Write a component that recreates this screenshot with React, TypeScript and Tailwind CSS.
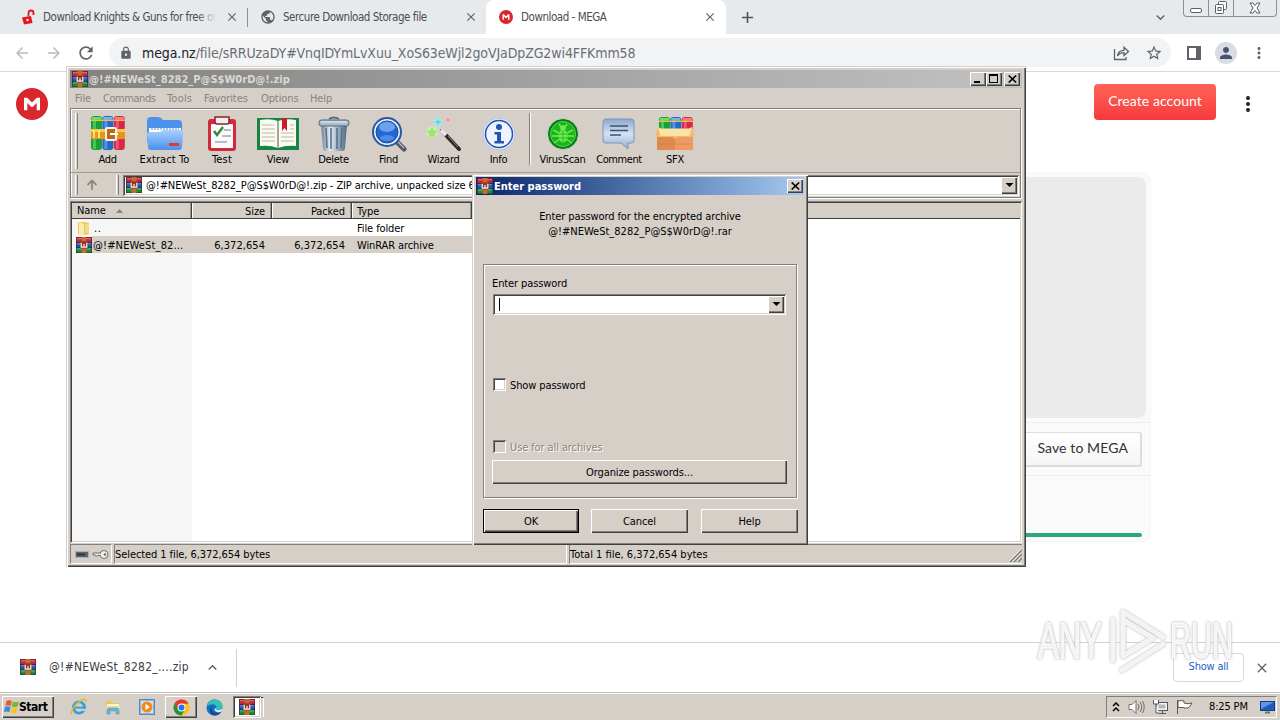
import React from "react";
import {
  MdArrowBack, MdArrowForward, MdRefresh, MdLock, MdStarBorder, MdPublic, MdMoreVert,
  MdExpandMore, MdExpandLess, MdAdd, MdClose, MdPerson,
} from "react-icons/md";

const ui = "font-['DejaVu_Sans_Condensed','DejaVu_Sans',sans-serif] [font-stretch:condensed] whitespace-pre";
const raised = "bg-[#d5cfc8] shadow-[inset_1px_1px_0_#fff,inset_-1px_-1px_0_#404040,inset_-2px_-2px_0_#808080]";
const sunken = "shadow-[inset_1px_1px_0_#808080,inset_-1px_-1px_0_#fff,inset_2px_2px_0_#404040,inset_-2px_-2px_0_#d5cfc8]";
const frame = "bg-[#d5cfc8] shadow-[inset_1px_1px_0_#d5cfc8,inset_2px_2px_0_#fff,inset_-1px_-1px_0_#404040,inset_-2px_-2px_0_#808080]";

function RarIcon({ size = 16 }: { size?: number }) {
  return (
    <svg width={size} height={size} viewBox="0 0 16 16" className="shrink-0">
      <rect x="0" y="0" width="16" height="16" fill="#3a1c28" />
      <rect x="0.5" y="0.5" width="15" height="4.6" fill="#c2283a" />
      <rect x="1" y="1" width="14" height="1.3" fill="#e0607c" />
      <rect x="0.5" y="5.8" width="15" height="4.6" fill="#2b50b4" />
      <rect x="1" y="6.2" width="14" height="1.2" fill="#6a8ae0" />
      <rect x="0.5" y="11" width="15" height="4.5" fill="#1c8a3c" />
      <rect x="1" y="11.3" width="14" height="1.2" fill="#55b860" />
      <rect x="5.6" y="0" width="4.8" height="4.500" fill="#c8682a" />
      <rect x="5.6" y="11.500" width="4.8" height="4.500" fill="#c8682a" />
      <rect x="4.5" y="4.500" width="7" height="7" fill="#8a3a2c" />
      <path d="M5.200 5.800v4.400h5.600V5.800M8 7v3" stroke="#f8f2ea" strokeWidth="1.2" fill="none" />
    </svg>
  );
}

function Books({ h = 34 }: { h?: number }) {
  const cols = ["#18a03a", "#2468cc", "#d82848"];
  const lights = ["#6cdc70", "#78b0f4", "#f87890"];
  return (
    <g>
      {cols.map((c, i) => (
        <g key={c}>
          <rect x={i * 11.4} y="0" width="11" height={h} rx="3" fill={c} />
          <rect x={i * 11.4 + 2} y="1" width="3" height={h - 2} fill={lights[i]} opacity="0.6" />
          <rect x={i * 11.4 + 1} y="1" width="9" height="2.500" fill={lights[i]} />
          <rect x={i * 11.4} y="3.500" width="11" height="1.5" fill="#f0c040" />
        </g>
      ))}
    </g>
  );
}

const AddIcon = () => (
  <svg width="36" height="36" viewBox="0 0 36 36">
    <g transform="translate(1 0)"><Books /></g>
    <rect x="1" y="13" width="34" height="10" fill="#e8951c" />
    <rect x="1" y="13" width="34" height="3" fill="#f8cc50" />
    <path d="M4 14v8M9 14v8" stroke="#fbe27a" strokeWidth="2" />
    <rect x="16" y="12" width="10" height="12" rx="1" fill="#b86c18" stroke="#f4f0e4" strokeWidth="2" />
    <path d="M20 18h8" stroke="#fff" strokeWidth="2" />
  </svg>
);
const ExtractIcon = () => (
  <svg width="38" height="36" viewBox="0 0 38 36">
    <defs><linearGradient id="fold" x1="0" y1="0" x2="0" y2="1"><stop offset="0" stopColor="#a8d2ff" /><stop offset="1" stopColor="#4a90ec" /></linearGradient></defs>
    <path d="M1 5q0-4 4-4h7q3 0 5 3h15q4 0 4 4v18H1z" fill="#4c92ec" />
    <path d="M3 12h32v9H3z" fill="#fff" />
    <path d="M5 13h28" stroke="#a8c4e8" strokeDasharray="2 1" strokeWidth="2" />
    <path d="M1 18q0-2 2-2h11l3-2h17q3 0 3 3l-1 14q0 3-3 3H5q-3 0-3-3z" fill="url(#fold)" />
    <rect x="23" y="27" width="10" height="3" fill="#e03c2c" />
  </svg>
);
const TestIcon = () => (
  <svg width="30" height="36" viewBox="0 0 30 36">
    <rect x="1" y="3" width="28" height="32" rx="3" fill="#d02a3c" />
    <rect x="4" y="8" width="22" height="24" rx="1" fill="#fafafa" />
    <path d="M8 1h14v5q0 2-2 2H10q-2 0-2-2z" fill="#eee" stroke="#8e1f2c" strokeWidth="1.5" />
    <path d="M7 15l3 4 6-8" stroke="#2c8a3c" strokeWidth="2.4" fill="none" />
    <path d="M17 14h7M15 20h9M8 26h12" stroke="#a4a8ac" strokeWidth="1.3" />
  </svg>
);
const ViewIcon = () => (
  <svg width="44" height="36" viewBox="0 0 44 36">
    <path d="M1 2h42v32H1z" fill="#168442" />
    <path d="M4 4q10-2 18 1 8-3 18-1v26q-10-1-18 2-8-3-18-2z" fill="#fcfbf2" />
    <path d="M22 5v27" stroke="#a8a694" strokeWidth="2" />
    <path d="M6 9h12M6 13h13M6 17h13M6 21h13M6 25h13M25 17h13M25 21h13M25 25h13M34 9h4M34 13h4" stroke="#b9b7aa" />
    <path d="M26 2h5v13l-2.5-3-2.500 3z" fill="#c81e2c" />
  </svg>
);
const DeleteIcon = () => (
  <svg width="32" height="36" viewBox="0 0 32 36">
    <defs><linearGradient id="bin"><stop offset="0" stopColor="#6a8098" /><stop offset=".35" stopColor="#e4edf5" /><stop offset=".7" stopColor="#8fa5ba" /><stop offset="1" stopColor="#4f6880" /></linearGradient></defs>
    <path d="M11 3q5-3 10 0" stroke="#56687a" strokeWidth="2" fill="none" />
    <path d="M3 9h26l-2 23q0 3-3 3H8q-3 0-3-3z" fill="url(#bin)" />
    <path d="M8 12l1 20M13 12v21M19 12v21M24 12l-1 20" stroke="#5a728a" strokeWidth="1.6" />
    <rect x="1" y="4" width="30" height="6" rx="2.500" fill="#a9bdce" stroke="#4f6478" />
    <path d="M3 6h26" stroke="#e8f0f6" />
  </svg>
);
const FindIcon = () => (
  <svg width="36" height="36" viewBox="0 0 36 36">
    <path d="M25 25l8 8" stroke="#55595e" strokeWidth="5" strokeLinecap="round" />
    <path d="M26 25l7 7" stroke="#b8bcc0" strokeWidth="1.3" />
    <circle cx="16" cy="16" r="14" fill="#e8f0fa" stroke="#2458a4" strokeWidth="2" />
    <circle cx="16" cy="16" r="11" fill="#2466d4" stroke="#174a98" />
    <ellipse cx="16" cy="11" rx="8" ry="5" fill="#7eb0f2" opacity=".8" />
    <ellipse cx="16" cy="22" rx="7" ry="3" fill="#5c9cf0" opacity=".7" />
  </svg>
);
const WizardIcon = () => (
  <svg width="36" height="36" viewBox="0 0 36 36">
    <path d="M16 15l17 18" stroke="#2c2624" strokeWidth="4" strokeLinecap="round" />
    <path d="M15 14l5 5" stroke="#e8e6e4" strokeWidth="4" />
    <path d="M22 20l10 11" stroke="#8a8280" />
    <circle cx="6" cy="16" r="6" fill="#c8f4a4" opacity=".7" /><path d="M6 11l1.500 3.500 4 .5-3 2.500 1 4-3.500-2-3.500 2 1-4-3-2.500 4-.5z" fill="#9ce66c" />
    <circle cx="12" cy="6" r="4.500" fill="#a4ecf4" opacity=".7" /><path d="M12 2l1 3 3 1-3 1-1 3-1-3-3-1 3-1z" fill="#5cd2e2" />
    <circle cx="22" cy="4" r="2.500" fill="#f8b8c0" opacity=".8" /><circle cx="22" cy="4" r="1" fill="#f06a80" />
  </svg>
);
const InfoIcon = () => (
  <svg width="36" height="36" viewBox="0 0 36 36">
    <circle cx="18" cy="18" r="16" fill="#e2ecfa" stroke="#b4c6e6" />
    <circle cx="18" cy="18" r="13.500" fill="#eef4ff" stroke="#2454b4" strokeWidth="1.5" />
    <circle cx="18" cy="11" r="3" fill="#2454b4" />
    <path d="M13.500 16H20v9h3v2.500H13.500V25H16v-6.500h-2.500z" fill="#2454b4" />
  </svg>
);
const VirusIcon = () => (
  <svg width="36" height="36" viewBox="0 0 36 36">
    <circle cx="18" cy="18" r="15.500" fill="#0a7418" stroke="#c4d8c0" strokeWidth="1" />
    <circle cx="18" cy="18" r="12.500" fill="#1cb41c" stroke="#58dc48" />
    <ellipse cx="18" cy="20" rx="4.500" ry="6.500" fill="#6cea50" /><circle cx="18" cy="12" r="2.800" fill="#6cea50" />
    <path d="M8 14l6 3M28 14l-6 3M7 20h7M29 20h-7M9 27l6-4M27 27l-6-4M14 8l2 3M22 8l-2 3" stroke="#6cea50" strokeWidth="1.500" />
    <path d="M18 14v12M14 18h8M14 22h8" stroke="#1cb41c" strokeWidth=".8" />
  </svg>
);
const CommentIcon = () => (
  <svg width="36" height="36" viewBox="0 0 36 36">
    <defs><linearGradient id="cm" x1="0" y1="0" x2="0" y2="1"><stop offset="0" stopColor="#8ea8cc" /><stop offset=".5" stopColor="#d4e2f4" /><stop offset="1" stopColor="#92acd2" /></linearGradient></defs>
    <path d="M5 3h25q3 0 3 3v18q0 3-3 3h-3v6l-7-6H5q-3 0-3-3V6q0-3 3-3z" fill="url(#cm)" stroke="#7c94b8" />
    <path d="M9 10h18M9 14.500h18M9 19h11" stroke="#3c5070" strokeWidth="1.600" />
  </svg>
);
const SfxIcon = () => (
  <svg width="40" height="36" viewBox="0 0 40 36">
    <g transform="translate(4 1)"><Books h={14} /></g>
    <path d="M2 18h36v16H2z" fill="#e08a50" />
    <path d="M20 18h18v16H20z" fill="#ee9a60" />
    <path d="M3 11l3 1.500h28l3-1.500v9H3z" fill="#fbe4a4" />
    <path d="M3 11L0 20l3 1h14l3 2 3-2h14l3-1-3-9-2.500 9h-29z" fill="#f0bc74" />
    <path d="M2 28h36" stroke="#c8703c" opacity=".4" />
  </svg>
);

const ChromeIcon = () => (
  <svg width="17" height="17" viewBox="0 0 18 18">
    <circle cx="9" cy="9" r="8.500" fill="#fbc116" />
    <path d="M1.600 4.800A8.500 8.500 0 0 0 9 17.500l3.600-6.400L9 9z" fill="#229342" />
    <path d="M1.600 4.800L5.400 11 9 5h7.400A8.500 8.500 0 0 0 1.600 4.800z" fill="#e33b2e" />
    <circle cx="9" cy="9" r="4.200" fill="#fff" /><circle cx="9" cy="9" r="3.200" fill="#2a72e8" />
  </svg>
);
const EdgeIcon = () => (
  <svg width="17" height="17" viewBox="0 0 18 18">
    <circle cx="9" cy="9" r="8.500" fill="#1272c8" />
    <path d="M.8 7.500C2 3 5.500.5 9.500.5c4.700 0 8 3.300 8 7 0 3-2.300 4.300-4.500 4.300-2 0-3-.8-2.300-2C12 7.500 9.500 5.500 7 5.500 4 5.500 2 6.500.8 7.500z" fill="#35c1b4" />
    <path d="M.8 7.500C2 3 5.500.5 9.500.5 7 1 3 3 .8 7.500z" fill="#2aa0e0" />
    <path d="M7 6.500c-2 3-.5 8 5 8.500 2 0 4-1.200 4.500-1.500-2 3-5.500 4.500-9 3.800C3.500 15.500 3 9.500 7 6.500z" fill="#0c4c98" />
    <path d="M10.700 9.800c-.6 1.400.7 2 2.300 2 2 0 3.500-.6 4.500-2.500 0 2-.8 3.600-1.500 4.200-3 1.300-6.500.3-7-2 0-1 .8-1.500 1.700-1.700z" fill="#e4eef0" />
  </svg>
);
const IeIcon = () => (
  <svg width="18" height="18" viewBox="0 0 18 18">
    <circle cx="9" cy="9.500" r="5.600" fill="none" stroke="#3a9ee0" strokeWidth="2.800" />
    <path d="M5 9.600h9.500" stroke="#3a9ee0" strokeWidth="2" />
    <path d="M11.500 11h5.500v1.800h-5.500z" fill="#d5cfc8" />
    <path d="M2 16.500C-.5 14 5 6 11 2.500c3-1.600 5.600-1.600 5 1.500" stroke="#e8b82c" strokeWidth="1.500" fill="none" />
  </svg>
);
const ExplorerIcon = () => (
  <svg width="18" height="18" viewBox="0 0 18 18">
    <path d="M2 3h5l1 2h7v9H2z" fill="#e8c858" /><path d="M3 6h12v3H3z" fill="#fbf4cc" />
    <path d="M2 8h14v6H2z" fill="#f6df8c" />
    <path d="M3 16v-4q0-2 2-2h8q2 0 2 2v4h-3v-3H6v3z" fill="#68b4e0" stroke="#4a94c4" strokeWidth=".6" />
  </svg>
);
const MediaIcon = () => (
  <svg width="16" height="16" viewBox="0 0 16 16">
    <rect x=".5" y=".5" width="15" height="15" fill="#8cb8e0" stroke="#5888b4" />
    <rect x="2" y="2" width="12" height="12" fill="#d4e2ee" />
    <circle cx="8" cy="8" r="5.500" fill="#f08a1c" /><path d="M6.500 5l4.500 3-4.500 3z" fill="#fff" />
  </svg>
);
const WinFlag = () => (
  <svg width="16" height="16" viewBox="0 0 16 16" className="shrink-0">
    <path d="M2.500 2Q5 .5 7.800 2L6.700 7Q4 5.700 1.300 7z" fill="#ec5a2c" />
    <path d="M8.700 2.400q3 1.300 6.300 0L13.800 7.600q-3 1.200-6.200-.1z" fill="#7ab83c" />
    <path d="M1 8q2.800-1.400 5.500 0l-1.200 5.200Q2.500 12 0 13z" fill="#3a8ae0" />
    <path d="M7.400 8.600q3 1.400 6.100.2L12.300 14q-3.200 1.200-6.100-.2z" fill="#f8c42c" />
  </svg>
);
const MegaLogo = ({ size }: { size: number }) => (
  <svg width={size} height={size} viewBox="0 0 32 32" className="shrink-0">
    <circle cx="16" cy="16" r="16" fill="#d9272e" />
    <path d="M8 22.300V9.700h3.200l4.800 4.800 4.800-4.800H24v12.600h-3.300v-7.400L16 19.500l-4.700-4.600v7.400z" fill="#fff" />
  </svg>
);
const DropArrow = () => <svg width="9" height="5" viewBox="0 0 9 5"><path d="M.5 0h8L4.500 4z" fill="#000" /></svg>;

function WinClose() {
  return (
    <div className={`${raised} w-4 h-[14px] flex items-center justify-center`}>
      <svg width="9" height="8" viewBox="0 0 9 8"><path d="M.7.5l7.500 7M8.200.5l-7.500 7" stroke="#000" strokeWidth="1.600" /></svg>
    </div>
  );
}

function Tab({ icon, label, fade, className }: { icon: React.ReactNode; label: string; fade?: boolean; className: string }) {
  return (
    <div className={`flex items-center h-[34px] shrink-0 ${className}`}>
      <span className="w-[14px] mr-[8px] flex justify-center">{icon}</span>
      <span className={`relative flex-1 overflow-hidden text-[11.5px] tracking-[-0.46px] text-[#4a4d51] pt-px ${ui}`}>
        {label}
        {fade && <span className="absolute right-0 top-0 h-full w-5 bg-linear-to-r from-transparent to-[#e7eaed]" />}
      </span>
      <MdClose className="ml-[8px] text-[#5f6368]" size={14} />
    </div>
  );
}

function Browser() {
  return (
    <>
      <div className="flex h-[34px] bg-[#e7eaed] shrink-0">
        <Tab className="w-[239px] pl-[21px]" fade label="Download Knights & Guns for free or" icon={
          <svg width="14" height="16" viewBox="0 0 14 16"><path d="M1 8.500l9-1.500 1.500 7-8.500 1.500z" fill="#e8141c" /><path d="M7.500 7.500V4q0-2.500 2.500-2.500T12.500 4v2" stroke="#e8141c" strokeWidth="1.800" fill="none" /><circle cx="6.500" cy="11" r="1.200" fill="#fff" /></svg>} />
        <div className="pt-2 w-[22px] pl-[8px]"><div className="w-px h-[19px] bg-[#8a8d91]" /></div>
        <Tab className="w-[217px]" label="Sercure Download Storage file" icon={<MdPublic size={16} className="text-[#5f6368] shrink-0" />} />
        <div className="w-2" />
        <div className="w-[240px] bg-white rounded-t-[8px]">
          <Tab className="w-[231px] pl-[13px]" label="Download - MEGA" icon={<MegaLogo size={14} />} />
        </div>
        <div className="flex items-center pl-[12px]"><MdAdd size={19} className="text-[#4d5156]" /></div>
        <div className="flex-1" />
        <div className="flex items-center pr-[14px]"><MdExpandMore size={17} className="text-[#5f6368]" /></div>
        <div className="flex h-[17px] w-[94px] mr-[3px] border border-t-0 border-[#8c9095] rounded-b-[4px]">
          <div className="w-[25px] border-r border-[#8c9095] flex justify-center items-end pb-[3px]"><div className="w-3 h-[5px] rounded-[2px] border border-[#5a5e63] bg-white" /></div>
          <div className="w-[25px] border-r border-[#8c9095] flex justify-center">
            <svg width="15" height="15" viewBox="0 0 15 15" fill="#fff" stroke="#5a5e63"><rect x="4.500" y="1.500" width="8" height="8" rx="1" /><rect x="1.500" y="4.500" width="8" height="9" rx="1" /><rect x="4" y="7.500" width="3" height="3" /></svg>
          </div>
          <div className="flex-1 flex justify-center pt-[2px]">
            <svg width="12" height="12" viewBox="0 0 12 12"><path d="M1 1h3l2 2.500L8 1h3L8 6l3 5H8L6 8.500 4 11H1l3-5z" fill="#fff" stroke="#5a5e63" /></svg>
          </div>
        </div>
      </div>
      <div className="flex items-center h-[38px] bg-white border-b border-[#d8d9db] shrink-0 text-[#5f6368]">
        <MdArrowBack size={18} className="ml-[13px] text-[#b9bbbe]" />
        <MdArrowForward size={18} className="ml-[14px] text-[#b9bbbe]" />
        <MdRefresh size={20} className="ml-[13px]" />
        <div className="ml-[13px] w-[1062px] h-[29px] rounded-full bg-[#f1f3f4] flex items-center">
          <MdLock size={14} className="ml-[10px] mr-[9px]" />
          <span className={`flex-1 text-[14px] tracking-[-0.1px] text-[#6a6e73] pt-px ${ui}`}><span className="text-[#202124]">mega.nz</span>/file/sRRUzaDY#VnqIDYmLvXuu_XoS63eWjl2goVJaDpZG2wi4FFKmm58</span>
          <svg width="17" height="16" viewBox="0 0 17 16" fill="none" stroke="#5f6368" strokeWidth="1.300" className="mr-[15px]"><path d="M1.500 4v10.500h11.500V12" /><path d="M4.500 11C5 7 7.500 5.300 11 5.300V2.200L15.500 6.500 11 10.500V7.700C8 7.700 6 8.500 4.500 11z" /></svg>
          <MdStarBorder size={18} className="mr-[8px]" />
        </div>
        <svg width="14" height="14" viewBox="0 0 14 14" className="ml-[16px]"><rect x="1" y="1" width="12" height="12" fill="#fff" stroke="#5f6368" strokeWidth="2" /><rect x="9" y="0" width="5" height="14" fill="#5f6368" /></svg>
        <div className="ml-[14px] w-[22px] h-[22px] rounded-full bg-[#d9dde3] flex items-center justify-center"><MdPerson size={18} className="text-[#46546e]" /></div>
        <MdMoreVert size={18} className="ml-[13px]" />
      </div>
      <div className="relative flex-1 bg-white">
        <div className="flex items-start justify-between">
          <div className="pl-4 pt-4"><MegaLogo size={32} /></div>
          <div className="flex pt-3 pr-[23px] items-center gap-[23px]">
            <div className="w-[122px] h-9 pb-[3px] rounded-[4px] bg-linear-to-b from-[#ff6258] to-[#f6393c] text-white font-['Lato',sans-serif] text-[14px] tracking-[0.06px] flex items-center justify-center">Create account</div>
            <div className="flex flex-col gap-[2px] w-[18px] items-center pt-1"><i className="w-1 h-1 rounded-full bg-[#222]" /><i className="w-1 h-1 rounded-full bg-[#222]" /><i className="w-1 h-1 rounded-full bg-[#222]" /></div>
          </div>
        </div>
        <div className="absolute left-[560px] top-[100px] w-[591px] h-[370px] rounded-[9px] bg-[#fafafa] border border-[#f6f6f6] flex flex-col">
          <div className="m-1 mt-[4px] h-[241px] rounded-[8px] bg-[#ebebeb]" />
          <div className="border-y border-[#eeeeee] h-[54px] flex items-center justify-end pr-2">
            <div className="h-[35px] w-[130px] rounded-[3px] border border-[#dcdcdc] border-b-2 border-r-2 bg-linear-to-b from-white to-[#f5f5f5] text-[#303233] font-['Lato',sans-serif] text-[14px] tracking-[0.1px] flex items-center justify-end pr-[12px] pb-[2px]">Save to MEGA</div>
          </div>
          <div className="mt-[57px] mr-2 h-1 rounded-full bg-[#2ba97d]" />
        </div>
      </div>
      <div className="h-[50px] shrink-0 border-t border-[#cfd0d2] bg-white flex items-center">
        <div className="ml-[20px] pb-[2px]"><RarIcon /></div>
        <span className={`ml-[13px] text-[12px] w-[141px] text-[#3c4043] tracking-[0.26px] pb-px ${ui}`}>@!#NEWeSt_8282_....zip</span>
        <MdExpandLess size={17} className="ml-[14px] text-[#5f6368]" />
        <div className="ml-[15px] w-px h-[38px] bg-[#cfd0d2]" />
        <div className="flex-1" />
        <div className={`w-[71px] h-[29px] border border-[#d6d8db] rounded-[4px] text-[#1a63c8] text-[11px] tracking-[-0.2px] flex items-center justify-center pb-px ${ui}`}>Show all</div>
        <MdClose size={16} className="ml-[10px] mr-[10px] text-[#5f6368]" />
      </div>
    </>
  );
}

const tools = [
  { l: "Add", w: "w-[55px]", t: "", i: <AddIcon /> },
  { l: "Extract To", w: "w-[59px]", t: "tracking-[0.1px]", i: <ExtractIcon /> },
  { l: "Test", w: "w-[56px]", t: "tracking-[0.2px]", i: <TestIcon /> },
  { l: "View", w: "w-[56px]", t: "", i: <ViewIcon /> },
  { l: "Delete", w: "w-[55px]", t: "", i: <DeleteIcon /> },
  { l: "Find", w: "w-[55px]", t: "", i: <FindIcon /> },
  { l: "Wizard", w: "w-[55px]", t: "", i: <WizardIcon /> },
  { l: "Info", w: "w-[55px]", t: "", i: <InfoIcon /> },
  { l: "VirusScan", w: "w-[57px]", t: "", i: <VirusIcon /> },
  { l: "Comment", w: "w-[56px]", t: "tracking-[-0.4px]", i: <CommentIcon /> },
  { l: "SFX", w: "w-[56px]", t: "", i: <SfxIcon /> },
];
const Grip = ({ className }: { className: string }) => <div className={`w-[3px] shrink-0 border-l border-white border-r border-r-[#808080] ${className}`} />;

function Archive() {
  return (
    <div className={`absolute left-[66px] top-[66px] w-[960px] h-[501px] pt-1 px-1 flex flex-col text-black text-[11px] leading-[13px] tracking-[-0.1px] ${ui} ${frame}`}>
      <div className="h-[18px] shrink-0 flex items-center pl-[2px] pr-[2px] bg-linear-to-r from-[#828282] to-[#c2c2c2]">
        <RarIcon />
        <span className="ml-[1px] flex-1 font-bold text-[#dcd8d2] tracking-[0px]">@!#NEWeSt_8282_P@S$W0rD@!.zip</span>
        <div className={`${raised} w-4 h-[14px] pl-1 pt-[9px]`}><div className="w-[6px] h-[2px] bg-black" /></div>
        <div className={`${raised} w-4 h-[14px] pl-[3px] pt-[2px] mr-[2px]`}><div className="w-[9px] h-[9px] border border-t-2 border-black" /></div>
        <WinClose />
      </div>
      <div className="h-[20px] shrink-0 flex items-center text-[#8a827b] tracking-[-0.1px] pl-[5px]">
        <span className="w-[28px]">File</span><span className="w-[64px] tracking-[-0.45px]">Commands</span><span className="w-[37px] tracking-[0.2px]">Tools</span><span className="w-[57px]">Favorites</span><span className="w-[49px]">Options</span><span>Help</span>
      </div>
      <div className="h-[90px] w-[951px] shrink-0 border border-[#808080] shadow-[inset_1px_1px_0_#fff,1px_1px_0_#fff] flex flex-col">
        <div className="flex h-[64px] pt-[4px] pl-[4px] border-b border-[#a09a94] tracking-[-0.3px]">
          <Grip className="h-[56px] mr-[2px]" />
          {tools.map((t) => (
            <React.Fragment key={t.l}>
              {t.l === "VirusScan" && <div className="w-[2px] h-[52px] mx-[3px] border-l border-[#808080] border-r border-r-white" />}
              <div className={`${t.w} shrink-0 flex flex-col items-center pt-[2px]`}>
                <div className="h-[38px] flex items-center">{t.i}</div>
                <span className={t.t}>{t.l}</span>
              </div>
            </React.Fragment>
          ))}
        </div>
        <div className="flex items-center h-[24px] pl-[4px]">
          <Grip className="h-5" />
          <svg width="12" height="12" viewBox="0 0 12 12" className="ml-[8px]"><path d="M6 11V2M1.500 6L6 1.500 10.500 6" stroke="#8e8882" strokeWidth="1.800" fill="none" /></svg>
          <Grip className="h-5 ml-[18px]" />
          <div className={`ml-[4px] w-[896px] h-[21px] bg-white flex items-center p-[2px] ${sunken}`}>
            <div className="ml-px"><RarIcon /></div>
            <span className="ml-[4px] flex-1">@!#NEWeSt_8282_P@S$W0rD@!.zip - ZIP archive, unpacked size 6,372,654 bytes</span>
            <div className={`${raised} w-4 h-[17px] flex items-center justify-center`}><DropArrow /></div>
          </div>
        </div>
      </div>
      <div className={`mt-[3px] h-[342px] w-[952px] shrink-0 bg-white p-[2px] flex flex-col ${sunken}`}>
        <div className="h-[16px] shrink-0 flex bg-[#d5cfc8] border-b border-[#404040] leading-[15px]">
          <div className="w-[120px] pl-[5px] border-r border-[#404040] shadow-[inset_-1px_0_0_#989490] flex items-center">Name<svg width="7" height="4" viewBox="0 0 7 4" className="ml-[10px]"><path d="M0 4h7L3.500 0z" fill="#8a8480" /></svg></div>
          <div className="w-[80px] pr-[6px] border-l border-l-white border-r border-[#404040] shadow-[inset_-1px_0_0_#989490] text-right pt-px">Size</div>
          <div className="w-[80px] pr-[6px] border-l border-l-white border-r border-[#404040] shadow-[inset_-1px_0_0_#989490] text-right pt-px">Packed</div>
          <div className="w-[120px] pl-[4px] border-l border-l-white border-r border-[#404040] shadow-[inset_-1px_0_0_#989490] pt-px">Type</div>
        </div>
        <div className="flex flex-col flex-1 bg-linear-to-r from-[#f6f6f6] from-[120px] to-white to-[120px]">
          <div className="flex h-[17px] items-center">
            <svg width="16" height="16" viewBox="0 0 16 16" className="ml-[4px]"><path d="M2 2h6l5 1v11l-5 1-6-1z" fill="#e8c85c" /><path d="M3 2l5 2v11l-5-1z" fill="#fbedab" /><path d="M9 4h4v9H9z" fill="#f4dc84" /></svg>
            <span className="ml-[2px] w-[263px] tracking-[0.5px] pt-[2px]">..</span><span className="pt-[2px]">File folder</span>
          </div>
          <div className="flex h-[17px] items-center">
            <div className="ml-[4px]"><RarIcon /></div>
            <div className="w-[380px] h-full flex items-center bg-[#d5cfc8] pl-px pt-[2px]">
              <span className="w-[99px] tracking-[0.15px]">@!#NEWeSt_82...</span><span className="w-[73px] text-right tracking-[0.05px]">6,372,654</span><span className="w-[80px] text-right tracking-[0.05px]">6,372,654</span><span className="pl-[12px]">WinRAR archive</span>
            </div>
          </div>
        </div>
      </div>
      <div className="mt-px h-[20px] shrink-0 flex gap-[2px]">
        <div className="w-[42px] border border-[#808080] border-b-white border-r-white flex items-center pl-1 gap-[3px]">
          <svg width="14" height="7" viewBox="0 0 14 7"><rect x=".5" y=".5" width="13" height="6" fill="#58686e" stroke="#a8b0b4" /><path d="M2 3.500h8" stroke="#2c383c" strokeWidth="2" /></svg>
          <svg width="17" height="11" viewBox="0 0 17 11"><circle cx="12" cy="5.500" r="4" fill="#f0f0f0" stroke="#707070" /><circle cx="13" cy="5.500" r="1.300" fill="#707070" /><path d="M8.500 4H1v2h2l1 1.500 1.500-1h3" fill="#e4e4e4" stroke="#707070" /></svg>
        </div>
        <div className="w-[453px] border border-[#808080] border-b-white border-r-white pt-[3px] tracking-[-0.08px]">Selected 1 file, 6,372,654 bytes</div>
        <div className="flex-1 border border-[#808080] border-b-white border-r-0 pt-[3px] flex justify-between tracking-[0px]">Total 1 file, 6,372,654 bytes
          <svg width="13" height="14" viewBox="0 0 13 14"><path d="M1 14L13 2M5 14l8-8M9 14l4-4" stroke="#808080" strokeWidth="1.500" /><path d="M0 13L12 1M4 13l8-8M8 13l4-4" stroke="#fff" strokeWidth=".7" /></svg>
        </div>
      </div>
    </div>
  );
}

function Dialog() {
  return (
    <div className={`absolute left-[472px] top-[174px] w-[336px] h-[371px] pt-[3px] px-1 flex flex-col text-black text-[11px] leading-[15px] tracking-[-0.1px] ${ui} ${frame}`}>
      <div className="h-[18px] flex items-center px-[1px] pr-[1px] bg-linear-to-r from-[#0a246a] to-[#a6caf0]">
        <RarIcon /><span className="ml-[1px] flex-1 text-white font-bold tracking-[0px]">Enter password</span><WinClose />
      </div>
      <div className="mt-[14px] text-center">Enter password for the encrypted archive<br /><span className="tracking-[0px]">@!#NEWeSt_8282_P@S$W0rD@!.rar</span></div>
      <div className="mt-[25px] ml-[7px] w-[314px] h-[234px] border border-[#808080] shadow-[inset_1px_1px_0_#fff,1px_1px_0_#fff] px-[8px] flex flex-col">
        <div className="mt-[11px] leading-[15px]">Enter password</div>
        <div className={`mt-[3px] ml-px w-[293px] h-[21px] bg-white flex items-center p-[2px] ${sunken}`}>
          <div className="ml-[4px] w-px h-[13px] bg-black" /><div className="flex-1" />
          <div className={`${raised} w-4 h-[17px] flex items-center justify-center`}><DropArrow /></div>
        </div>
        <div className="mt-[63px] ml-px flex items-center h-[13px]"><div className={`w-[13px] h-[13px] bg-white ${sunken}`} /><span className="ml-[4px] pt-px">Show password</span></div>
        <div className="mt-[49px] ml-px flex items-center h-[13px] text-[#8a847e]"><div className={`w-[13px] h-[13px] ${sunken}`} /><span className="ml-[4px] pt-px [text-shadow:1px_1px_0_#fff]">Use for all archives</span></div>
        <div className={`mt-[7px] w-[295px] h-[24px] flex items-center justify-center shrink-0 ${raised}`}>Organize passwords...</div>
      </div>
      <div className="mt-[11px] ml-[7px] flex">
        <div className="w-[96px] h-[24px] bg-black p-px"><div className={`h-full flex items-center justify-center ${raised}`}>OK</div></div>
        <div className={`ml-[12px] w-[97px] h-[24px] flex items-center justify-center ${raised}`}>Cancel</div>
        <div className={`ml-[13px] w-[97px] h-[24px] flex items-center justify-center ${raised}`}>Help</div>
      </div>
    </div>
  );
}

function Taskbar() {
  return (
    <div className={`h-[28px] shrink-0 bg-[#d5cfc8] border-t border-[#c4beb8] shadow-[inset_0_1px_0_#fff] flex items-center pt-[1px] text-black text-[11px] tracking-[-0.3px] ${ui}`}>
      <div className={`ml-[2px] w-[52px] h-[22px] flex items-center pl-[2px] font-bold text-[12px] tracking-[-0.45px] ${raised}`}><WinFlag /><span className="-ml-px">Start</span></div>
      <div className="ml-[16px]"><IeIcon /></div>
      <div className="ml-[16px]"><ExplorerIcon /></div>
      <div className="ml-[17px]"><MediaIcon /></div>
      <div className={`ml-[10px] w-[32px] h-[22px] flex items-center justify-center ${raised}`}><ChromeIcon /></div>
      <div className="ml-[9px]"><EdgeIcon /></div>
      <div className={`ml-[10px] w-[28px] h-[22px] bg-white flex items-center justify-center ${sunken}`}><RarIcon /></div>
      <div className="w-[3px] h-[20px] border-r border-white border-t border-t-[#404040]" />
      <div className="flex-1" />
      <div className="w-[171px] mr-[3px] h-[22px] border border-[#808080] border-r-white border-b-white flex items-center">
        <svg width="8" height="10" viewBox="0 0 8 10" className="ml-[5px]"><path d="M1 4l3-3 3 3M1 9l3-3 3 3" stroke="#000" strokeWidth="1.500" fill="none" /></svg>
        <svg width="17" height="16" viewBox="0 0 17 16" className="ml-[8px]" fill="none" stroke="#707070"><path d="M1 5.500h3l4-4v13l-4-4H1z" fill="#fff" /><path d="M10 5q2 3 0 6M12 3q3.500 5 0 10M14.500 2q3.500 6 0 12" /></svg>
        <svg width="17" height="16" viewBox="0 0 17 16" className="ml-[7px]" fill="#f4f4f4" stroke="#585858"><rect x="4.500" y="3.500" width="11" height="8" /><rect x="6.500" y="5.500" width="7" height="4" fill="#b8b8b8" stroke="none" /><path d="M7 14.500h7M10.500 12v2" /><path d="M1.500 1v4h5V1M4 5v9h3" fill="#fff" /></svg>
        <svg width="17" height="16" viewBox="0 0 17 16" className="ml-[7px]" fill="#fff" stroke="#585858"><path d="M1.500 1v14" /><path d="M2 2q3-1 6 0v2q4 1.500 8 0-2 4-4 5H8V8.500H2z" /></svg>
        <span className="ml-[16px] w-[42px] tracking-[-0.15px]">8:25 PM</span>
        <svg width="15" height="15" viewBox="0 0 15 15" className="ml-[9px]"><rect x=".5" y="1.500" width="14" height="9" fill="#1c5cc0" stroke="#183c78" /><path d="M1 2h13L1 9z" fill="#5c98e8" /><path d="M5 12.500h5" stroke="#687078" strokeWidth="2" /></svg>
      </div>
    </div>
  );
}

function Watermark() {
  return (
    <div className="absolute left-[1038px] top-[608px] h-[66px] w-[200px] flex items-center text-white/80 [filter:drop-shadow(0_0_1px_#bbb)_drop-shadow(0_0_1px_#ddd)] font-['Liberation_Sans',sans-serif] text-[50px] leading-[66px]">
      <span className="w-[66px] shrink-0"><span className="inline-block origin-left scale-x-[0.62] [-webkit-text-stroke:1.500px_#ffffffcc]">ANY</span></span>
      <svg width="62" height="66" viewBox="0 0 62 66" className="shrink-0 ml-[4px]" fill="none" stroke="currentColor" strokeWidth="5" strokeLinejoin="round" strokeLinecap="round"><path d="M5 52V12" /><path d="M15 48V4l40 25M15 12l30 18-30 18" /><path d="M14 62l41-26" /></svg>
      <span className="shrink-0"><span className="inline-block origin-left scale-x-[0.58] [-webkit-text-stroke:1.500px_#ffffffcc]">RUN</span></span>
    </div>
  );
}

export default function App() {
  return (
    <div className="relative w-[1280px] h-[720px] overflow-hidden flex flex-col bg-white">
      <Browser />
      <Taskbar />
      <Archive />
      <Dialog />
      <Watermark />
    </div>
  );
}
